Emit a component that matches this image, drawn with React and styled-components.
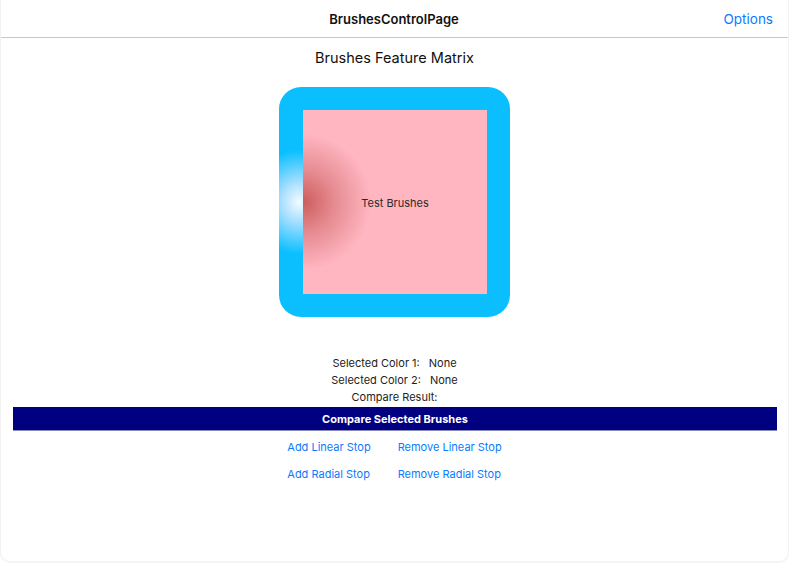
import React from 'react';
import styled, { createGlobalStyle } from 'styled-components';

const GlobalStyle = createGlobalStyle`
  html, body {
    margin: 0;
    padding: 0;
    background: #fff;
  }

  body {
    font-family: Inter, "Noto Sans", "Liberation Sans", sans-serif;
    color: #1c1c1c;
  }
`;

const Window = styled.div`
  width: 789px;
  height: 563px;
  box-sizing: border-box;
  background: #fff;
  border: 1px solid #f2f2f2;
  border-top: none;
  border-radius: 0 0 10px 10px;
  box-shadow: inset 0 -1px 0 #f6f6f6;
  overflow: hidden;
  display: flex;
  flex-direction: column;
`;

const NavBar = styled.header`
  height: 37px;
  flex-shrink: 0;
  border-bottom: 1px solid #c8c8c8;
  display: grid;
  grid-template-columns: 1fr auto 1fr;
  align-items: center;
  padding: 0 15px 0 0;
`;

const NavTitle = styled.h1`
  grid-column: 2;
  margin: 0;
  font-size: 13px;
  font-weight: 600;
  color: #111;
  padding-left: 14px;
`;

const NavAction = styled.span`
  grid-column: 3;
  justify-self: end;
  font-size: 13.5px;
  color: #0a7aff;
`;

const Content = styled.main`
  display: flex;
  flex-direction: column;
  align-items: center;
  padding-top: 10px;
`;

const PageTitle = styled.h2`
  margin: 0;
  height: 20px;
  line-height: 20px;
  font-size: 14.5px;
  font-weight: 400;
  color: #111;
`;

const BrushFrame = styled.div`
  margin-top: 19px;
  width: 231px;
  height: 230px;
  box-sizing: border-box;
  padding: 23px 23px 23px 24px;
  border-radius: 22px;
  background: radial-gradient(ellipse 46px 52px at 20px 50%, #f4fbff 0%, #a8dfff 38%, #0bbfff 100%);
  display: flex;
`;

const BrushFill = styled.div`
  flex: 1;
  background: radial-gradient(circle 68px at 0 50%, #cd5c5c 0%, #e58a90 45%, #ffb6c1 100%);
  display: flex;
  align-items: center;
  justify-content: center;
  font-size: 11px;
  color: #2a2a2a;
  padding-top: 1px;
`;

const InfoList = styled.div`
  margin-top: 38px;
  display: flex;
  flex-direction: column;
  align-items: center;
`;

const InfoRow = styled.div`
  height: 17px;
  line-height: 17px;
  font-size: 11px;
  color: #222;
  display: flex;
  gap: 9px;
`;

const CompareButton = styled.button`
  align-self: stretch;
  margin: 1px 11px 0 12px;
  height: 24px;
  border: none;
  border-bottom: 1px solid #8a8ab8;
  background: #000080;
  color: #fff;
  font-family: inherit;
  font-size: 11px;
  font-weight: 700;
  padding: 0;
`;

const StopGrid = styled.div`
  margin-top: 2px;
  display: grid;
  grid-template-columns: auto auto;
  column-gap: 27px;
  grid-auto-rows: 27px;
  align-items: center;
`;

const StopLink = styled.span`
  font-size: 11px;
  color: #0a7aff;
  padding-top: 1px;
`;

export default function App() {
  return (
    <>
      <GlobalStyle />
      <Window>
        <NavBar>
          <NavTitle>BrushesControlPage</NavTitle>
          <NavAction>Options</NavAction>
        </NavBar>
        <Content>
          <PageTitle>Brushes Feature Matrix</PageTitle>
          <BrushFrame>
            <BrushFill>Test Brushes</BrushFill>
          </BrushFrame>
          <InfoList>
            <InfoRow>
              <span>Selected Color 1:</span>
              <span>None</span>
            </InfoRow>
            <InfoRow>
              <span>Selected Color 2:</span>
              <span>None</span>
            </InfoRow>
            <InfoRow>
              <span>Compare Result:</span>
            </InfoRow>
          </InfoList>
          <CompareButton>Compare Selected Brushes</CompareButton>
          <StopGrid>
            <StopLink>Add Linear Stop</StopLink>
            <StopLink>Remove Linear Stop</StopLink>
            <StopLink>Add Radial Stop</StopLink>
            <StopLink>Remove Radial Stop</StopLink>
          </StopGrid>
        </Content>
      </Window>
    </>
  );
}
